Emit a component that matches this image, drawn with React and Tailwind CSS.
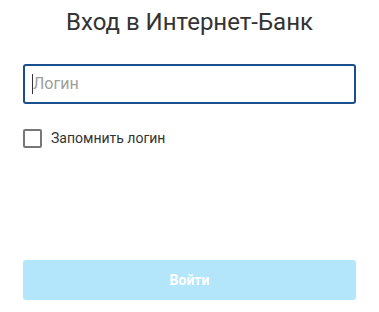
import React from 'react';

const App = () => {
  return (
    <div className="w-[379px] h-[312px] bg-white px-[23px] pt-[8px] font-['Roboto',sans-serif]">
      <h1 className="text-center text-[24px] leading-[28px] text-[#333333]">Вход в Интернет-Банк</h1>
      <div className="mt-[28px] h-[40px] rounded-[3px] border-2 border-[#1b4f8b] flex items-center px-[7px]">
        <span className="w-px h-[20px] bg-[#333]"></span>
        <input
          className="flex-1 outline-none text-[16px] text-[#333] placeholder-[#9e9e9e] bg-transparent"
          placeholder="Логин"
        />
      </div>
      <label className="mt-[24px] flex items-center gap-[9px]">
        <span className="w-[19px] h-[19px] rounded-[2px] border-2 border-[#777777]"></span>
        <span className="text-[14px] text-[#333333]">Запомнить логин</span>
      </label>
      <button className="mt-[111px] w-full h-[40px] rounded-[3px] bg-[#b3e5fb] text-white text-[14px] font-bold">
        Войти
      </button>
    </div>
  );
};

export default App;
